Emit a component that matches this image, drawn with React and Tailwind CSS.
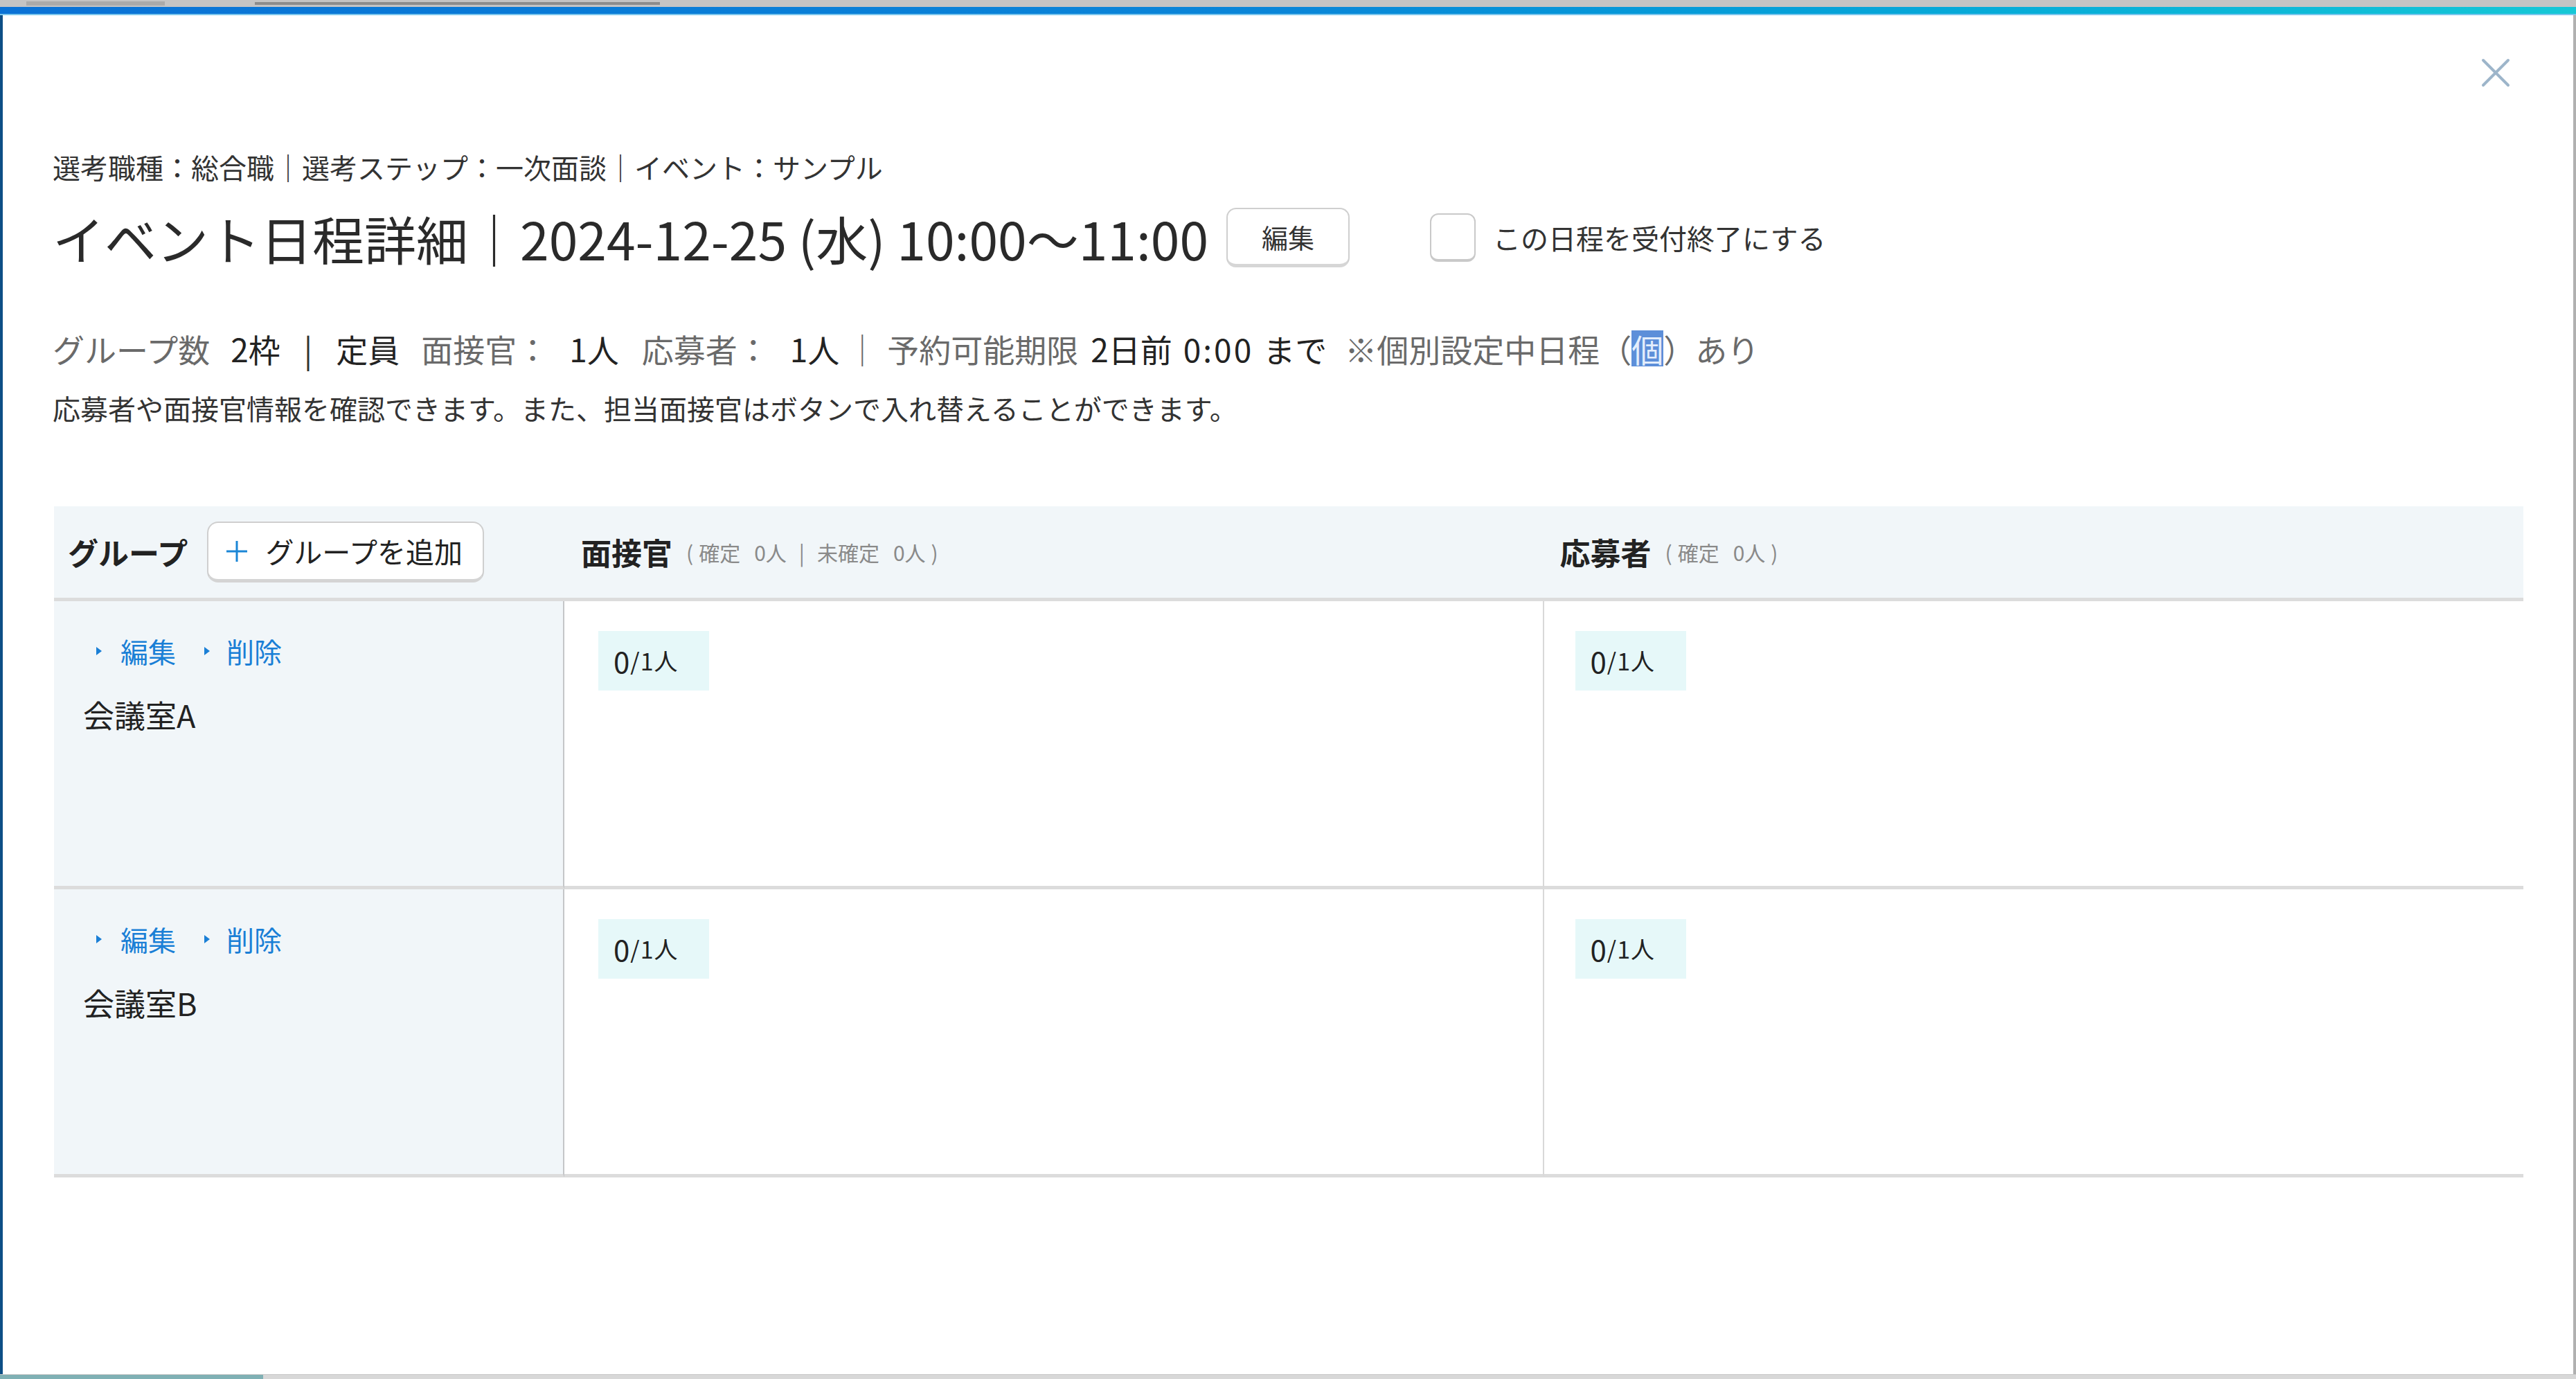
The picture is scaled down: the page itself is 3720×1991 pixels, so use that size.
import React from "react";

const F = "font-['Noto_Sans_CJK_JP','Noto_Sans',sans-serif]";

function Badge() {
  return (
    <div className="w-[160px] h-[86px] bg-[#e6f8f9] flex items-center pl-[22px] text-[#222] tracking-[1px]">
      <span className="text-[42px] leading-none">0</span>
      <span className="text-[34px] leading-none">/1人</span>
    </div>
  );
}

function Tri() {
  return (
    <svg width="10" height="18" viewBox="0 0 10 18">
      <path d="M1 3 L9 9 L1 15 Z" fill="#1a7fd6" />
    </svg>
  );
}

function Row({ name }) {
  return (
    <>
      <div className="bg-[#f1f6f9] border-r-2 border-[#c4c6c8] border-b-[5px] border-b-[#dcdcdc] h-[416px] pt-[47px] pl-[42px]">
        <div className="flex items-center h-[50px] text-[40px] leading-[50px] text-[#1a7fd6] pl-[18px]">
          <Tri />
          <span className="ml-[26px] mr-[40px]">編集</span>
          <Tri />
          <span className="ml-[23px]">削除</span>
        </div>
        <div className="mt-[42px] h-[50px] text-[45px] leading-[50px] text-[#222]">{name}</div>
      </div>
      <div className="bg-white border-r-2 border-[#d8d8d8] border-b-[5px] border-b-[#dcdcdc] h-[416px] pt-[43px] pl-[49px]">
        <Badge />
      </div>
      <div className="bg-white border-b-[5px] border-b-[#dcdcdc] h-[416px] pt-[43px] pl-[45px]">
        <Badge />
      </div>
    </>
  );
}

function Small({ children, className = "" }) {
  return <span className={`text-[30px] text-[#8a8a8a] leading-none ${className}`}>{children}</span>;
}

export default function App() {
  return (
    <div className={`${F} relative w-[3720px] h-[1991px] bg-white overflow-hidden flex flex-col`}>
      {/* window chrome top */}
      <div className="h-[10px] bg-[#c4c4c4] flex items-center shrink-0">
        <div className="ml-[38px] w-[200px] h-[6px] bg-[#9a9a9a] opacity-60" />
        <div className="ml-[130px] w-[585px] h-[4px] bg-[#8c8c8c]" />
      </div>
      <div className="h-[12px] shrink-0 bg-gradient-to-r from-[#0a72d6] via-[#0a86d8] to-[#16c8d6] border-b-2 border-b-[#7cc6ec]" />

      {/* main */}
      <div className="flex-1 flex flex-col border-l-[4px] border-l-[#0e4f86] border-r-[4px] border-r-[#b0b0b0] pl-[72px] pr-[72px] pt-[189px]">
        <div className="h-[60px] leading-[60px] text-[40px] text-[#333] whitespace-nowrap">
          選考職種：総合職｜選考ステップ：一次面談｜イベント：サンプル
        </div>

        <div className="mt-[27px] h-[90px] flex items-center whitespace-nowrap">
          <div className="text-[75px] leading-none text-[#2a2a2a]">
            イベント日程詳細｜2024-12-25 (水) 10:00〜11:00
          </div>
          <button className="ml-[26px] w-[178px] h-[86px] rounded-[14px] border-2 border-[#cfcfcf] border-b-[5px] border-b-[#d6d6d6] bg-white text-[38px] text-[#333] flex items-center justify-center">
            編集
          </button>
          <div className="ml-[116px] w-[66px] h-[70px] rounded-[12px] border-2 border-[#c9c9c9] border-b-[4px] bg-white" />
          <div className="ml-[25px] text-[40px] text-[#333] leading-none">この日程を受付終了にする</div>
        </div>

        <div className="mt-[85px] h-[60px] flex items-center text-[46px] leading-none whitespace-nowrap text-[#6a6a6a]">
          <span>グループ数</span>
          <span className="ml-[30px] text-[#222]">2枠</span>
          <span className="ml-[34px] text-[#333]">|</span>
          <span className="ml-[34px] text-[#222]">定員</span>
          <span className="ml-[31px]">面接官：</span>
          <span className="ml-[30px] text-[#222]">1人</span>
          <span className="ml-[33px]">応募者：</span>
          <span className="ml-[30px] text-[#222]">1人</span>
          <span className="ml-[10px]">｜</span>
          <span className="ml-[13px]">予約可能期限</span>
          <span className="ml-[18px] text-[#222]">2日前</span>
          <span className="ml-[16px] text-[#222] tracking-[3px]">0:00</span>
          <span className="ml-[14px] text-[#222]">まで</span>
          <span className="ml-[26px]">※個別設定中日程（</span>
          <span className="bg-[#5d8fd9] text-[#e4eefc] h-[52px] flex items-center">個</span>
          <span>）あり</span>
        </div>

        <div className="mt-[26px] h-[60px] leading-[60px] text-[40px] text-[#333] whitespace-nowrap">
          応募者や面接官情報を確認できます。また、担当面接官はボタンで入れ替えることができます。
        </div>

        {/* table */}
        <div className="mt-[112px] ml-[2px] grid grid-cols-[737px_1fr_1fr]">
          <div className="bg-[#f1f6f9] h-[137px] border-b-[5px] border-b-[#dcdcdc] flex items-center pl-[20px]">
            <span className="text-[44px] font-bold text-[#222] leading-none">グループ</span>
            <button className="ml-[28px] w-[400px] h-[88px] rounded-[16px] border-2 border-[#cfcfcf] border-b-[5px] border-b-[#d4d4d4] bg-white flex items-center pl-[22px]">
              <svg width="38" height="38" viewBox="0 0 38 38">
                <path d="M19 4 V34 M4 19 H34" stroke="#1a86d6" strokeWidth="3" />
              </svg>
              <span className="ml-[22px] text-[41px] text-[#222] leading-none">グループを追加</span>
            </button>
          </div>
          <div className="bg-[#f1f6f9] h-[137px] border-b-[5px] border-b-[#dcdcdc] flex items-center pl-[24px]">
            <span className="text-[44px] font-bold text-[#222] leading-none">面接官</span>
            <Small className="ml-[20px]">(</Small>
            <Small className="ml-[8px]">確定</Small>
            <Small className="ml-[20px]">0人</Small>
            <Small className="ml-[18px]">|</Small>
            <Small className="ml-[18px]">未確定</Small>
            <Small className="ml-[20px]">0人</Small>
            <Small className="ml-[8px]">)</Small>
          </div>
          <div className="bg-[#f1f6f9] h-[137px] border-b-[5px] border-b-[#dcdcdc] flex items-center pl-[23px]">
            <span className="text-[44px] font-bold text-[#222] leading-none">応募者</span>
            <Small className="ml-[20px]">(</Small>
            <Small className="ml-[8px]">確定</Small>
            <Small className="ml-[20px]">0人</Small>
            <Small className="ml-[8px]">)</Small>
          </div>

          <Row name="会議室A" />
          <Row name="会議室B" />
        </div>
      </div>

      {/* bottom strip */}
      <div className="h-[7px] shrink-0 bg-[#d8d8d8] flex border-t border-[#c8c8c8]">
        <div className="w-[380px] h-full bg-[#7fb0b4]" />
      </div>

      {/* close button */}
      <button className="absolute left-[3582px] top-[83px] w-[44px] h-[44px]">
        <svg width="44" height="44" viewBox="0 0 44 44">
          <path d="M4 4 L40 40 M40 4 L4 40" stroke="#9db5ca" strokeWidth="4" strokeLinecap="round" />
        </svg>
      </button>
    </div>
  );
}
